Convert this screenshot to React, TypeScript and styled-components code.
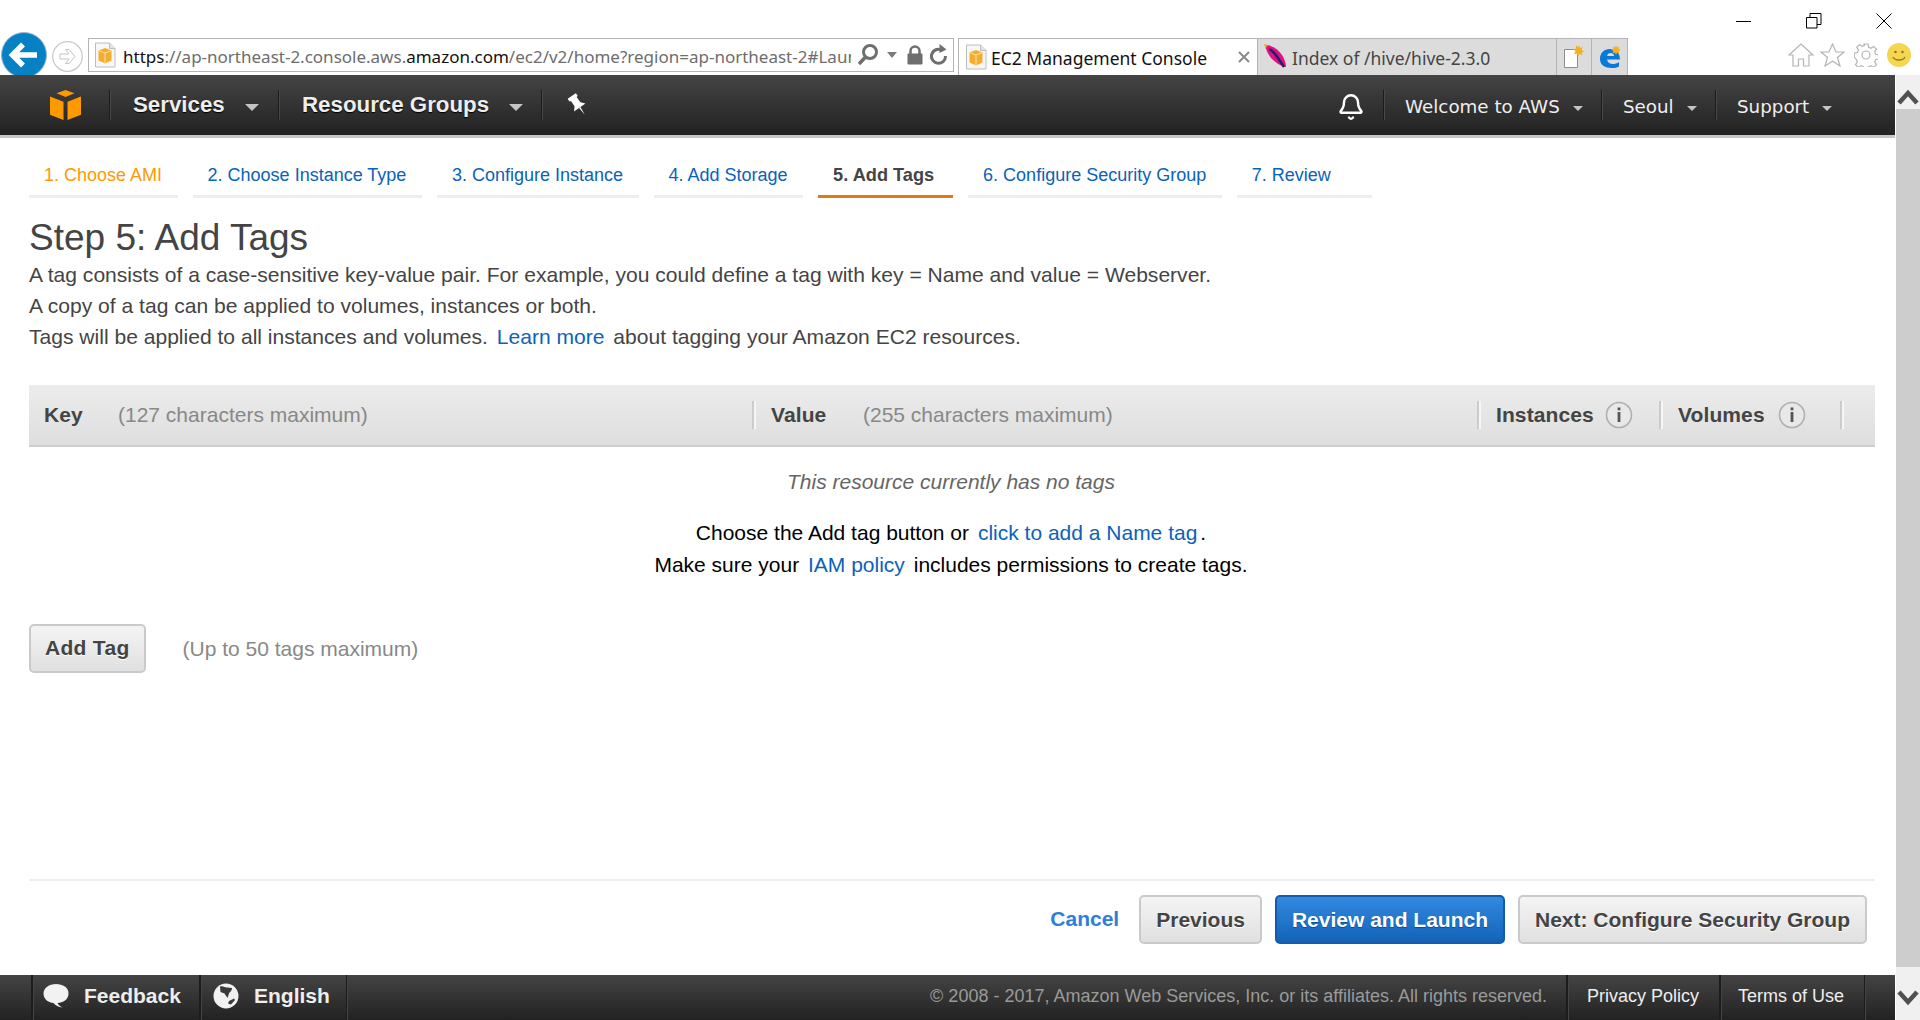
import React from "react";
import styled, { createGlobalStyle } from "styled-components";
import { Bell } from "lucide-react";

const Global = createGlobalStyle`
  html, body { margin: 0; padding: 0; height: 100%; overflow: hidden; background: #fff; }
  body { font-family: "Liberation Sans", Arial, sans-serif; }
  * { box-sizing: border-box; }
`;

const Page = styled.div`
  width: 1920px;
  height: 1020px;
  display: flex;
  flex-direction: column;
  overflow: hidden;
`;

/* ---------- browser chrome ---------- */
const TitleRow = styled.div`
  height: 32px;
  display: flex;
  justify-content: flex-end;
  align-items: flex-start;
  padding: 13px 28px 0 0;
  gap: 54px;
`;
const WinIcon = styled.svg`
  width: 16px;
  height: 16px;
  display: block;
  fill: none;
  stroke: #000;
  stroke-width: 1;
`;
const ToolRow = styled.div`
  height: 43px;
  display: flex;
  align-items: flex-start;
  font-family: "Noto Sans", "Open Sans", sans-serif;
`;
const BackClip = styled.div`
  width: 46px;
  height: 43px;
  margin-left: 1px;
  overflow: hidden;
  flex: none;
`;
const Forward = styled.svg`
  width: 31px;
  height: 33px;
  margin: 8px 5px 0 5px;
  flex: none;
`;
const Address = styled.div`
  width: 866px;
  height: 34px;
  margin-top: 6px;
  margin-right: 4px;
  border: 1px solid #b4b4b4;
  display: flex;
  align-items: center;
  padding-left: 5px;
  flex: none;
`;
const Url = styled.div`
  width: 728px;
  margin-left: 7px;
  padding-top: 3px;
  font-size: 17px;
  white-space: nowrap;
  overflow: hidden;
  color: #6d6d6d;
`;
const Strong = styled.span`
  color: #111;
`;
const AddrTool = styled.svg<{ $gap?: number }>`
  flex: none;
  margin-left: ${(p) => p.$gap ?? 0}px;
`;
const BrowserTab = styled.div<{ $active?: boolean; $w: number }>`
  width: ${(p) => p.$w}px;
  height: 37px;
  margin-top: 6px;
  flex: none;
  display: flex;
  align-items: center;
  padding-left: 6px;
  border: 1px solid #b4b4b4;
  border-bottom: none;
  border-right: ${(p) => (p.$active ? "none" : "1px solid #b4b4b4")};
  background: ${(p) => (p.$active ? "#fff" : "#dcdcdc")};
  color: ${(p) => (p.$active ? "#111" : "#444")};
  font-size: 17.5px;
  white-space: nowrap;
`;
const TabLabel = styled.span`
  margin-left: 4px;
  padding-top: 2px;
  flex: 1;
`;
const TabClose = styled.svg`
  flex: none;
  margin-right: 7px;
`;
const TabButton = styled.div<{ $w: number }>`
  width: ${(p) => p.$w}px;
  height: 37px;
  margin-top: 6px;
  flex: none;
  display: flex;
  align-items: center;
  justify-content: center;
  background: #dcdcdc;
  border: 1px solid #b4b4b4;
  border-left: none;
  border-bottom: none;
`;
const BrowserTools = styled.div`
  margin-left: auto;
  margin-top: 11px;
  padding-right: 9px;
  display: flex;
  gap: 9px;
  align-items: center;
`;
const HomeIcon = styled.svg`
  margin-right: -3px;
`;

/* ---------- page frame ---------- */
const Frame = styled.div`
  flex: 1;
  min-height: 0;
  display: flex;
`;
const Main = styled.div`
  flex: 1;
  min-width: 0;
  display: flex;
  flex-direction: column;
`;
const Scroll = styled.div`
  width: 24px;
  flex: none;
  margin-left: 1px;
  background: #f0f0f0;
  display: flex;
  flex-direction: column;
`;
const ScrollArrow = styled.div<{ $up?: boolean }>`
  height: 34px;
  flex: none;
  display: flex;
  align-items: center;
  justify-content: center;
  padding: ${(p) => (p.$up ? "10px 0 0" : "0 0 10px")};
`;
const ScrollThumb = styled.div`
  flex: 1;
  background: #cdcdcd;
  margin-bottom: 19px;
`;

/* ---------- top nav ---------- */
const Bar = styled.div<{ $h: number }>`
  height: ${(p) => p.$h}px;
  flex: none;
  display: flex;
  align-items: center;
  background: linear-gradient(#444444, #222222);
  color: #f0f0f0;
`;
const NavRule = styled.div`
  height: 3px;
  flex: none;
  background: #c8c8c8;
`;
const NavSep = styled.div`
  width: 2px;
  height: 30px;
  flex: none;
  background: #1c1c1c;
  border-right: 1px solid #484848;
`;
const LogoSlot = styled.div`
  width: 109px;
  padding-left: 50px;
  flex: none;
  display: flex;
`;
const NavBold = styled.div<{ $w: number }>`
  width: ${(p) => p.$w}px;
  flex: none;
  display: flex;
  align-items: center;
  padding-left: 22px;
  font-size: 22.3px;
  font-weight: 700;
  color: #eee;
  text-shadow: 0 1px 1px #000;
  white-space: nowrap;
`;
const Caret = styled.i<{ $ml: number; $big?: boolean }>`
  display: block;
  width: 0;
  height: 0;
  margin-left: ${(p) => p.$ml}px;
  margin-top: 4px;
  border-left: ${(p) => (p.$big ? 7 : 5)}px solid transparent;
  border-right: ${(p) => (p.$big ? 7 : 5)}px solid transparent;
  border-top: ${(p) => (p.$big ? 7 : 5)}px solid #c4c4c4;
`;
const NavSoft = styled.div<{ $w: number }>`
  width: ${(p) => p.$w}px;
  flex: none;
  display: flex;
  align-items: center;
  padding: 2px 0 0 20px;
  font-family: "DejaVu Sans", sans-serif;
  font-size: 18.3px;
  color: #eee;
  white-space: nowrap;
`;
const PinSlot = styled.div`
  width: 60px;
  flex: none;
  display: flex;
  justify-content: center;
  padding-left: 9px;
`;
const NavRight = styled.div`
  margin-left: auto;
  display: flex;
  align-items: center;
  padding-right: 66px;
`;
const BellSlot = styled.div`
  margin-right: 18px;
  padding-top: 3px;
  display: flex;
`;

/* ---------- wizard ---------- */
const Content = styled.div`
  flex: 1;
  min-height: 0;
  padding: 0 20px 0 29px;
  display: flex;
  flex-direction: column;
`;
const Steps = styled.div`
  display: flex;
  gap: 15px;
  margin-top: 20px;
`;
const Step = styled.a<{ $state: "done" | "active" | "todo" }>`
  height: 40px;
  min-width: 135px;
  padding: 7px 15.5px 0 15px;
  font-size: ${(p) => (p.$state === "active" ? 18.2 : 18)}px;
  line-height: 21px;
  white-space: nowrap;
  font-weight: ${(p) => (p.$state === "active" ? 700 : 400)};
  color: ${(p) => (p.$state === "done" ? "#ff9900" : p.$state === "active" ? "#444" : "#0a62ba")};
  border-bottom: 3px solid ${(p) => (p.$state === "active" ? "#e47911" : "#eeeeee")};
`;
const Title = styled.h1`
  margin: 18px 0 0;
  font-size: 37px;
  line-height: 44px;
  font-weight: 400;
  color: #444;
`;
const Lines = styled.div`
  margin-top: -1px;
  font-size: 21.07px;
  line-height: 31.2px;
  color: #444;
`;
const Link = styled.a`
  color: #0a62ba;
  margin: 0 3px;
`;
const HeaderRow = styled.div`
  margin-top: 32px;
  height: 62px;
  flex: none;
  display: flex;
  align-items: center;
  background: linear-gradient(#ececec, #dedede);
  border-bottom: 2px solid #cdcdcd;
  color: #444;
`;
const HeadCell = styled.div<{ $w: number }>`
  width: ${(p) => p.$w}px;
  flex: none;
  height: 28px;
  display: flex;
  align-items: center;
  padding-left: 15px;
  border-right: 2px solid #ccc;
  box-shadow: 2px 0 0 #f6f6f6;
  margin-right: 2px;
  white-space: nowrap;
`;
const HeadName = styled.b<{ $w: number }>`
  width: ${(p) => p.$w}px;
  flex: none;
  font-size: 21px;
  letter-spacing: 0.1px;
`;
const HeadHint = styled.span`
  font-size: 21px;
  color: #888;
`;
const InfoIcon = styled.svg`
  flex: none;
  display: block;
`;
const Empty = styled.div`
  text-align: center;
  font-size: 21px;
  color: #000;
  padding-right: 2px;
`;
const EmptyNote = styled.div`
  margin-top: 19px;
  line-height: 31px;
  font-style: italic;
  color: #666;
  margin-bottom: 20px;
`;
const EmptyLine = styled.div`
  line-height: 32px;
`;
const AddRow = styled.div`
  margin-top: 43px;
  display: flex;
  align-items: center;
`;
const Btn = styled.button<{ $primary?: boolean }>`
  height: 49px;
  padding: 0 15px;
  flex: none;
  font-family: "Liberation Sans", Arial, sans-serif;
  font-size: 21px;
  font-weight: 700;
  border-radius: 5px;
  border: 2px solid ${(p) => (p.$primary ? "#125bad" : "#cacaca")};
  background: ${(p) => (p.$primary ? "linear-gradient(#338ae0, #1263b8)" : "linear-gradient(#f4f4f4, #e0e0e0)")};
  color: ${(p) => (p.$primary ? "#fff" : "#444")};
  text-shadow: ${(p) => (p.$primary ? "0 1px 1px #0a4a8e" : "0 1px 0 #fff")};
  white-space: nowrap;
`;
const AddBtn = styled(Btn)`
  padding: 0 14px;
  letter-spacing: 0.3px;
`;
const AddHint = styled.span`
  margin-left: 37px;
  padding-top: 2px;
  font-size: 21px;
  color: #888;
`;
const Actions = styled.div`
  margin-top: auto;
  height: 96px;
  flex: none;
  border-top: 2px solid #eeeeee;
  display: flex;
  justify-content: flex-end;
  align-items: flex-start;
  padding: 14px 8px 0 0;
  gap: 13px;
`;
const Cancel = styled.a`
  margin-top: 12px;
  margin-right: 7px;
  font-size: 21px;
  font-weight: 700;
  color: #2d80d8;
`;

/* ---------- footer ---------- */
const FootItem = styled.div<{ $w: number; $bold?: boolean; $pad: number }>`
  width: ${(p) => p.$w}px;
  height: 45px;
  flex: none;
  display: flex;
  align-items: center;
  padding: 0 0 ${(p) => (p.$bold ? 4 : 2)}px ${(p) => p.$pad}px;
  gap: 15px;
  border-left: 2px solid #1c1c1c;
  box-shadow: inset 1px 0 0 #444;
  font-size: ${(p) => (p.$bold ? 21 : 18)}px;
  font-weight: ${(p) => (p.$bold ? 700 : 400)};
  color: #eee;
  white-space: nowrap;
`;
const FootEnd = styled.div`
  width: 2px;
  height: 45px;
  flex: none;
  background: #1c1c1c;
  border-right: 1px solid #444;
`;
const Copy = styled.div`
  margin-left: auto;
  margin-right: 19px;
  padding-bottom: 2px;
  font-size: 18px;
  color: #9a9a9a;
  white-space: nowrap;
`;
const FootGap = styled.div`
  width: 31px;
  flex: none;
`;
const FootTail = styled.div`
  width: 29px;
  flex: none;
`;

/* ---------- drawings ---------- */
const Favicon = () => (
  <svg width="22" height="26" viewBox="0 0 22 26" style={{ flex: "none" }}>
    <path d="M1.5 1h14l5.5 5.500v18.500h-19.500z" fill="#f7f7f7" stroke="#bdbdbd" />
    <path d="M15.500 1v5.500h5.500" fill="#e4e4e4" stroke="#bdbdbd" />
    <path d="M11 6l6.500 2.500v10l-6.500 3-6.500-3v-10z" fill="#f4ae2c" />
    <path d="M4.500 8.500l6.500 2.500 6.500-2.500M11 11v10.500" fill="none" stroke="#fbe2ae" strokeWidth="1" />
  </svg>
);
const Cube = () => (
  <svg width="31" height="30" viewBox="0 0 31 30">
    <path d="M15.500 0l9 3.300-9 3.700-9-3.700z" fill="#ff9900" />
    <path d="M0 6.500l13.500 5.300v18.200l-13.500-5.300z" fill="#ff9900" />
    <path d="M31 6.500l-13.500 5.300v18.200l13.500-5.300z" fill="#ff9900" />
  </svg>
);
const Pin = () => (
  <svg width="22" height="24" viewBox="0 0 22 24" fill="#fff">
    <g transform="rotate(-35 11 12)">
      <rect x="6" y="1" width="10" height="3.500" rx="0.500" />
      <rect x="7.500" y="4" width="7" height="8" />
      <path d="M7.500 11h7l3.500 4h-14z" />
      <path d="M10.200 15h1.600l-.8 9z" />
    </g>
  </svg>
);
const Info = () => (
  <InfoIcon width="28" height="28" viewBox="0 0 28 28">
    <circle cx="14" cy="14" r="12.500" fill="#e8e8e8" stroke="#b0b0b0" strokeWidth="1.600" />
    <rect x="12.600" y="11" width="2.800" height="10" fill="#555" />
    <rect x="12.600" y="6.500" width="2.800" height="2.800" fill="#555" />
  </InfoIcon>
);
const Chat = () => (
  <svg width="26" height="26" viewBox="0 0 26 26" style={{ flex: "none" }}>
    <path d="M13 1c7 0 12.500 3.500 12.500 9.500S20 20 14.500 20c1 2 3 3.500 5 4.500-4-.5-7-2-9-4.500C5 19.500.5 16 .5 10.500S6 1 13 1z" fill="#f2f2f2" />
  </svg>
);
const Globe = () => (
  <svg width="26" height="26" viewBox="0 0 26 26" style={{ flex: "none" }}>
    <circle cx="13" cy="13" r="12.500" fill="#f2f2f2" />
    <path d="M7 3.500c3-1 4.500 1 7 1l5 .5c0 3-2 3.500-3 5.500l-1.500 4.500-3-4.500-4-1.500zM16 18l5-2.500 1 1.500-4 4.500-3-1z" fill="#3a3a3a" />
  </svg>
);

export default function App() {
  return (
    <Page>
      <Global />
      <TitleRow>
        <WinIcon viewBox="0 0 16 16"><path d="M0 8.500h15" /></WinIcon>
        <WinIcon viewBox="0 0 16 16"><path d="M.5 4.500h10.500v10.500h-10.500zM4 4.500v-4h11v11h-4" /></WinIcon>
        <WinIcon viewBox="0 0 16 16"><path d="M.5.5l15 15M15.500.5l-15 15" /></WinIcon>
      </TitleRow>
      <ToolRow>
        <BackClip>
          <svg width="46" height="46" viewBox="0 0 46 46">
            <circle cx="23" cy="23" r="22.500" fill="#0681c4" stroke="#9fb6c6" strokeWidth="1" />
            <path d="M36 23H13M22 12.500L11.500 23 22 33.500" fill="none" stroke="#fff" strokeWidth="5.500" />
          </svg>
        </BackClip>
        <Forward viewBox="0 0 31 33">
          <circle cx="15.500" cy="16.500" r="14.800" fill="#fff" stroke="#c8c8c8" strokeWidth="1.200" />
          <path d="M8 14h9l-3.500-4.500h3.500l6 7-6 7h-3.500l3.500-4.500h-9z" fill="#fff" stroke="#c4c4c4" />
        </Forward>
        <Address>
          <Favicon />
          <Url>
            <Strong>https</Strong>://ap-northeast-2.console.aws.<Strong>amazon.com</Strong>/ec2/v2/home?region=ap-northeast-2#LaunchInstanceWizard:
          </Url>
          <AddrTool $gap={6} width="22" height="24" viewBox="0 0 22 24">
            <circle cx="13" cy="9" r="6.500" fill="none" stroke="#6e6e6e" strokeWidth="3" />
            <path d="M8.500 14L2 21" stroke="#6e6e6e" strokeWidth="3.500" />
          </AddrTool>
          <AddrTool $gap={8} width="10" height="6" viewBox="0 0 10 6">
            <path d="M0 0h10l-5 6z" fill="#7a7a7a" />
          </AddrTool>
          <AddrTool $gap={10} width="16" height="20" viewBox="0 0 16 20">
            <path d="M3.500 9V6a4.500 4.500 0 0 1 9 0v3" fill="none" stroke="#6e6e6e" strokeWidth="2.500" />
            <rect x="0.500" y="8.500" width="15" height="11" rx="1" fill="#6e6e6e" />
          </AddrTool>
          <AddrTool $gap={7} width="18" height="22" viewBox="0 0 18 22">
            <path d="M12.500 6.500A7 7 0 1 0 15.500 12" fill="none" stroke="#6e6e6e" strokeWidth="3" />
            <path d="M9.500 0l7 5.500-7 3.500z" fill="#6e6e6e" />
          </AddrTool>
        </Address>
        <BrowserTab $active $w={299}>
          <Favicon />
          <TabLabel>EC2 Management Console</TabLabel>
          <TabClose width="12" height="12" viewBox="0 0 12 12">
            <path d="M1 1l10 10M11 1L1 11" stroke="#8a8a8a" strokeWidth="2" />
          </TabClose>
        </BrowserTab>
        <BrowserTab $w={300}>
          <svg width="24" height="26" viewBox="0 0 24 26" style={{ flex: "none" }}>
            <path d="M1 1c7 0 13 4 17 10 2 3 4 8 4 12-6-1-11-5-15-9C4 10 2 6 1 1z" fill="#e0127c" />
            <path d="M5 5c4 2 7 6 9 9 2 3 4 6 6 9" fill="none" stroke="#2a1a78" strokeWidth="2.500" />
            <path d="M0 0l4 1-2.500 3.500z" fill="#e8a32a" />
          </svg>
          <TabLabel>Index of /hive/hive-2.3.0</TabLabel>
        </BrowserTab>
        <TabButton $w={35}>
          <svg width="22" height="26" viewBox="0 0 22 26">
            <path d="M1.500 5.500h13v18h-13z" fill="#fff" stroke="#8e8e8e" />
            <path d="M16 1l1 3 3-1-1.500 3 3 1.500-3 1 1 3-3-1.500-1.500 2.500-1-3-3 .5 1.500-3-2.500-1.500 3-1v-3l2.500 1.500z" fill="#f6b01e" />
          </svg>
        </TabButton>
        <TabButton $w={36}>
          <svg width="24" height="26" viewBox="0 0 24 26">
            <path d="M2 15c0-6 4-10 10-10 5 0 10 3 10 10.500H9c.5 3 3 4.500 6 4.500 2 0 4-.5 6-2v4.500c-2 1-4 1.500-7 1.500-7 0-12-3-12-9z" fill="#0a78d6" />
            <path d="M9 12h7c0-2-1.500-3-3.500-3S9.500 10 9 12z" fill="#dcdcdc" />
            <path d="M18 1l1 2.500 2.500-1-1 2.500 2.500 1-2.500 1 1 2.500-2.500-1-1 2.500-1-2.500-2.500 1 1-2.500-2.500-1 2.500-1-1-2.500 2.500 1z" fill="#f6b01e" />
          </svg>
        </TabButton>
        <BrowserTools>
          <HomeIcon width="26" height="24" viewBox="0 0 26 24" fill="#fff" stroke="#b4b4b4" strokeWidth="1.200">
            <path d="M1 12L13 1l12 11h-4v11h-5.500v-7h-5v7H5V12z" />
          </HomeIcon>
          <svg width="25" height="24" viewBox="0 0 25 24" fill="#fff" stroke="#b4b4b4" strokeWidth="1.200">
            <path d="M12.500 1l3.500 8h8l-6.500 5.500 2.500 8.500-7.500-4.700-7.500 4.700 2.500-8.500L1 9h8z" />
          </svg>
          <svg width="24" height="24" viewBox="0 0 24 24" fill="none" stroke="#b4b4b4" strokeWidth="1.200">
            <circle cx="12" cy="12" r="4" />
            <path d="M10 1h4l.6 3.200 2.400 1 2.700-1.800 2.800 2.800-1.800 2.700 1 2.400 3.200.6v4l-3.200.6-1 2.400 1.800 2.700-2.800 2.800-2.700-1.800-2.400 1-.6 1.400h-4l-.6-1.400-2.400-1-2.700 1.800-2.800-2.800 1.800-2.700-1-2.400L.3 14v-4l3.200-.6 1-2.400-1.800-2.700 2.800-2.800 2.700 1.800 2.400-1z" />
          </svg>
          <svg width="24" height="24" viewBox="0 0 24 24">
            <circle cx="12" cy="12" r="12" fill="#f6d650" />
            <circle cx="8.500" cy="9" r="1.300" fill="#8a7a20" />
            <circle cx="15.500" cy="9" r="1.300" fill="#8a7a20" />
            <path d="M6 14c2 4 10 4 12 0" fill="none" stroke="#8a7a20" strokeWidth="1.300" />
          </svg>
        </BrowserTools>
      </ToolRow>
      <Frame>
        <Main>
          <Bar $h={60}>
            <LogoSlot><Cube /></LogoSlot>
            <NavSep />
            <NavBold $w={167}>Services<Caret $ml={20} $big /></NavBold>
            <NavSep />
            <NavBold $w={261}>Resource Groups<Caret $ml={20} $big /></NavBold>
            <NavSep />
            <PinSlot><Pin /></PinSlot>
            <NavRight>
              <BellSlot><Bell size={28} color="#fff" strokeWidth={2.1} /></BellSlot>
              <NavSep />
              <NavSoft $w={216}>Welcome to AWS<Caret $ml={13} /></NavSoft>
              <NavSep />
              <NavSoft $w={112}>Seoul<Caret $ml={13} /></NavSoft>
              <NavSep />
              <NavSoft $w={112}>Support<Caret $ml={13} /></NavSoft>
            </NavRight>
          </Bar>
          <NavRule />
          <Content>
            <Steps>
              <Step $state="done">1. Choose AMI</Step>
              <Step $state="todo">2. Choose Instance Type</Step>
              <Step $state="todo">3. Configure Instance</Step>
              <Step $state="todo">4. Add Storage</Step>
              <Step $state="active">5. Add Tags</Step>
              <Step $state="todo">6. Configure Security Group</Step>
              <Step $state="todo">7. Review</Step>
            </Steps>
            <Title>Step 5: Add Tags</Title>
            <Lines>
              <div>A tag consists of a case-sensitive key-value pair. For example, you could define a tag with key = Name and value = Webserver.</div>
              <div>A copy of a tag can be applied to volumes, instances or both.</div>
              <div>Tags will be applied to all instances and volumes.<Link> Learn more</Link> about tagging your Amazon EC2 resources.</div>
            </Lines>
            <HeaderRow>
              <HeadCell $w={725}>
                <HeadName $w={74}>Key</HeadName>
                <HeadHint>(127 characters maximum)</HeadHint>
              </HeadCell>
              <HeadCell $w={723}>
                <HeadName $w={92}>Value</HeadName>
                <HeadHint>(255 characters maximum)</HeadHint>
              </HeadCell>
              <HeadCell $w={180}>
                <HeadName $w={109}>Instances</HeadName>
                <Info />
              </HeadCell>
              <HeadCell $w={179}>
                <HeadName $w={100}>Volumes</HeadName>
                <Info />
              </HeadCell>
            </HeaderRow>
            <Empty>
              <EmptyNote>This resource currently has no tags</EmptyNote>
              <EmptyLine>Choose the Add tag button or<Link> click to add a Name tag</Link>.</EmptyLine>
              <EmptyLine>Make sure your<Link> IAM policy</Link> includes permissions to create tags.</EmptyLine>
            </Empty>
            <AddRow>
              <AddBtn>Add Tag</AddBtn>
              <AddHint>(Up to 50 tags maximum)</AddHint>
            </AddRow>
            <Actions>
              <Cancel>Cancel</Cancel>
              <Btn>Previous</Btn>
              <Btn $primary>Review and Launch</Btn>
              <Btn>Next: Configure Security Group</Btn>
            </Actions>
          </Content>
          <Bar $h={45}>
            <FootGap />
            <FootItem $w={168} $bold $pad={10}><Chat />Feedback</FootItem>
            <FootItem $w={147} $bold $pad={12}><Globe />English</FootItem>
            <FootEnd />
            <Copy>© 2008 - 2017, Amazon Web Services, Inc. or its affiliates. All rights reserved.</Copy>
            <FootItem $w={153} $pad={19}>Privacy Policy</FootItem>
            <FootItem $w={145} $pad={17}>Terms of Use</FootItem>
            <FootEnd />
            <FootTail />
          </Bar>
        </Main>
        <Scroll>
          <ScrollArrow $up>
            <svg width="22" height="16" viewBox="0 0 22 16"><path d="M2 14L11 4l9 10" fill="none" stroke="#505050" strokeWidth="4.500" /></svg>
          </ScrollArrow>
          <ScrollThumb />
          <ScrollArrow>
            <svg width="22" height="16" viewBox="0 0 22 16"><path d="M2 2l9 10 9-10" fill="none" stroke="#505050" strokeWidth="4.500" /></svg>
          </ScrollArrow>
        </Scroll>
      </Frame>
    </Page>
  );
}
